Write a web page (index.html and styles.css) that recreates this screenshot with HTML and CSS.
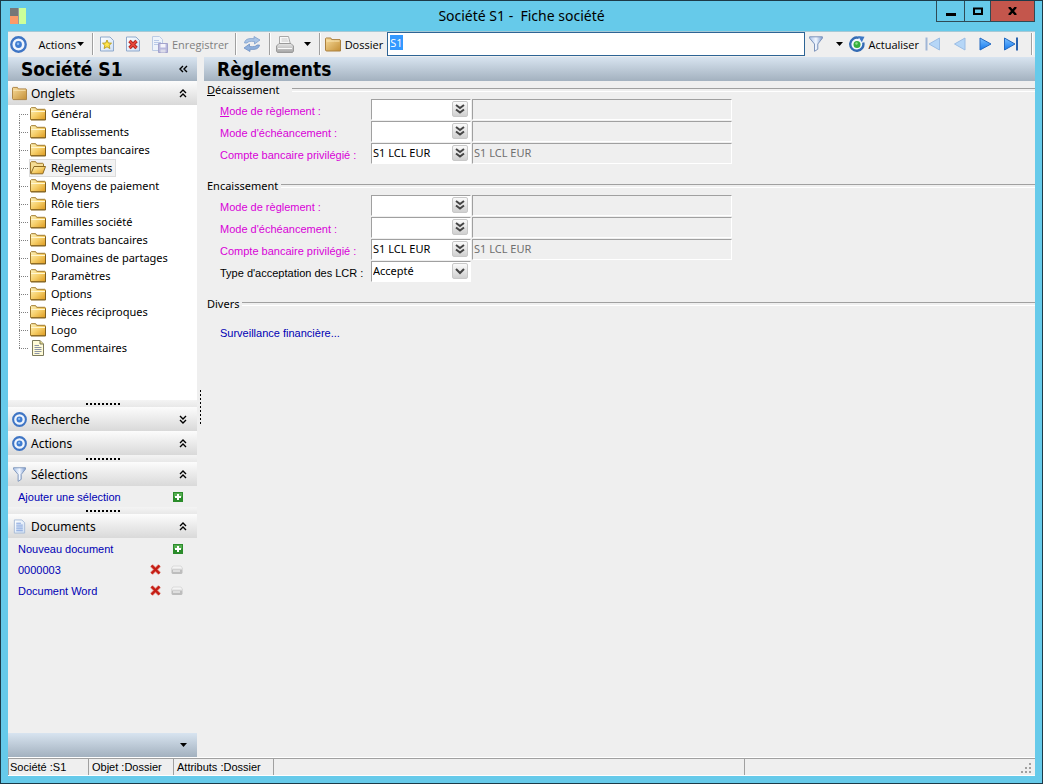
FILE: index.html
```html
<!DOCTYPE html>
<html lang="fr">
<head>
     <meta charset="UTF-8">
     <meta name="viewport" content="width=device-width, initial-scale=1.0">
     <title>Société S1 - Fiche société</title>
     <link rel="stylesheet" href="styles.css">
</head>
<body>
     <!-- shared icons -->
     <svg class="defs" aria-hidden="true">
          <defs>
               <linearGradient id="gold" x1="0" y1="0" x2="1" y2="1">
                    <stop offset="0" stop-color="#fdf3c0"/><stop offset="0.5" stop-color="#f6cf6a"/><stop offset="1" stop-color="#dd9a20"/>
               </linearGradient>
               <linearGradient id="tan" x1="0" y1="0" x2="1" y2="1">
                    <stop offset="0" stop-color="#f8dc9c"/><stop offset="1" stop-color="#c48f35"/>
               </linearGradient>
               <linearGradient id="funnel" x1="0" y1="0" x2="1" y2="0">
                    <stop offset="0" stop-color="#a9c3ea"/><stop offset="0.5" stop-color="#f2f7ff"/><stop offset="1" stop-color="#7d9cd0"/>
               </linearGradient>
               <linearGradient id="blue" x1="0" y1="0" x2="0" y2="1">
                    <stop offset="0" stop-color="#7cc0ff"/><stop offset="1" stop-color="#1479ee"/>
               </linearGradient>
               <linearGradient id="page" x1="0" y1="0" x2="1" y2="1">
                    <stop offset="0" stop-color="#ffffff"/><stop offset="1" stop-color="#cfe0f5"/>
               </linearGradient>
               <linearGradient id="silver" x1="0" y1="0" x2="0" y2="1">
                    <stop offset="0" stop-color="#e6e6e6"/><stop offset="1" stop-color="#a4a4a4"/>
               </linearGradient>
               <symbol id="i-target" viewBox="0 0 16 16">
                    <circle cx="8" cy="8" r="6.8" fill="#eef4fd" stroke="#3f75c4" stroke-width="2.2"/>
                    <circle cx="8" cy="8" r="3.2" fill="#3d7bd0"/>
                    <circle cx="7.6" cy="7.4" r="1.2" fill="#8dbcf2"/>
               </symbol>
               <symbol id="i-folder" viewBox="0 0 16 14">
                    <path d="M.5 12.5v-11l.8-.8h4.4l1 1.6h8.2l.6.6v9.6z" fill="url(#gold)" stroke="#a07a2c"/>
                    <path d="M1 4.5h14" stroke="#fff6d0"/>
                    <path d="M15.5 4v9H1" fill="none" stroke="#80601f"/>
               </symbol>
               <symbol id="i-folder-tan" viewBox="0 0 16 15">
                    <path d="M.5 13V1.5L1.2 1h4.6l.9 1.6h8.3l.5.6V14H1.2z" fill="url(#tan)" stroke="#ab8140"/>
                    <path d="M1.5 4h8l5 0" stroke="#fbe8b8"/>
               </symbol>
               <symbol id="i-folder-open" viewBox="0 0 16 14">
                    <path d="M.5 12.5v-11l.8-.8h4.4l1 1.6h6.2l.6.6v2.6" fill="#f5dd94" stroke="#a07a2c"/>
                    <path d="M.8 12.8L4 5.5h11.5l-2.7 7.3z" fill="url(#gold)" stroke="#8d6a22"/>
               </symbol>
               <symbol id="i-note" viewBox="0 0 14 16">
                    <path d="M1.5.5h7.5l3.5 3.5v11.5h-11z" fill="#fffbd8" stroke="#7c7a5c"/>
                    <path d="M9 .5V4h3.5" fill="#e9dc8a" stroke="#7c7a5c"/>
                    <path d="M3.5 5.5H8M3.5 7.5h7M3.5 9.5h7M3.5 11.5h7M3.5 13.5h5" stroke="#8c94a8"/>
               </symbol>
               <symbol id="i-doc" viewBox="0 0 14 16">
                    <path d="M1.5 1h8L12.5 4v11h-11z" fill="url(#page)" stroke="#a8bbd6"/>
                    <path d="M3.5 4.5h5M3.5 6.5h7M3.5 8.5h7M3.5 10.5h7M3.5 12.5h7" stroke="#7d9edb"/>
               </symbol>
               <symbol id="i-new" viewBox="0 0 14 16">
                    <path d="M.5 1h9.5L13.5 4.5V15H.5z" fill="url(#page)" stroke="#8fa9cc"/>
                    <path d="M7 4l1.3 3 3.2.2-2.4 2.1.8 3.2L7 10.8l-2.9 1.7.8-3.2L2.5 7.200l3.200-.2z" fill="#ffe54a" stroke="#b89a18" stroke-width=".9"/>
               </symbol>
               <symbol id="i-delete" viewBox="0 0 14 16">
                    <path d="M.5 1h9.5L13.5 4.5V15H.5z" fill="url(#page)" stroke="#8fa9cc"/>
                    <path d="M3.5 5l7 7M10.5 5l-7 7" stroke="#a01812" stroke-width="3.4"/>
                    <path d="M3.5 5l7 7M10.5 5l-7 7" stroke="#e6463c" stroke-width="1.8"/>
               </symbol>
               <symbol id="i-save" viewBox="0 0 16 17">
                    <path d="M.5.5h7l3 3v11H.5z" fill="#eef3fb" stroke="#bccbe4"/>
                    <path d="M2 4.5h5M2 6.5h7M2 8.5h5" stroke="#b9c9e8"/>
                    <path d="M6.5 7.5h9v9h-9z" fill="#b9b9de" stroke="#a3a3cc"/>
                    <path d="M8.500 8h5v3.500h-5z" fill="#f4f4fb"/>
                    <path d="M8.500 13.500h5v3h-5z" fill="#dcdcea"/>
               </symbol>
               <symbol id="i-sync" viewBox="0 0 18 16">
                    <path d="M1.5 7C2 3.500 5 2 11 2.800V.5L17 4l-5.500 4V5.500C7.500 5 5 5.500 4 7z" fill="#a9c4e6" stroke="#7f9fcb" stroke-width=".8"/>
                    <path d="M16.500 9c-.5 3.500-3.500 5-9.500 4.200v2.300L1 12l5.500-4v2.500c4 .5 6.500 0 7.500-1.500z" fill="#8fb0dd" stroke="#6e90c2" stroke-width=".8"/>
               </symbol>
               <symbol id="i-print" viewBox="0 0 18 17">
                    <path d="M3.5.5h9l2 8h-11z" fill="#f8f8f8" stroke="#a8a8a8"/>
                    <path d="M5.5 3h6M5.5 5h7" stroke="#c8c8c8"/>
                    <path d="M.5 10L3 7.500h12l2.500 2.500v5l-1 1.500h-15l-1-1.500z" fill="url(#silver)" stroke="#9a9a9a"/>
                    <path d="M2 12.500h14" stroke="#fafafa"/>
               </symbol>
               <symbol id="i-funnel" viewBox="0 0 14 16">
                    <path d="M.6.8h12.800v1.400L8.800 8v5.200L5.500 15.300V8L.6 2.200z" fill="url(#funnel)" stroke="#7e95bb"/>
               </symbol>
               <symbol id="i-reload" viewBox="0 0 16 16">
                    <path d="M14.200 6.500A6.600 6.600 0 1 1 9.800 1.900" fill="#f3f8fe" stroke="#356cb4" stroke-width="2.400"/>
                    <path d="M9 0l6.500.8-2.700 5.400z" fill="#3e78c6"/>
                    <circle cx="8" cy="8.5" r="3.5" fill="#35b03d"/>
                    <circle cx="7.5" cy="7.5" r="1.2" fill="#94e08a"/>
               </symbol>
               <symbol id="i-first" viewBox="0 0 16 16">
                    <path d="M1.5 1.5v13" stroke="#a0b6d6" stroke-width="2"/>
                    <path d="M14.5 2v12L4 8z" fill="#b5d6f7" stroke="#9bbde4"/>
               </symbol>
               <symbol id="i-prev" viewBox="0 0 16 16">
                    <path d="M14 2v12L3.5 8z" fill="#b5d6f7" stroke="#9bbde4"/>
               </symbol>
               <symbol id="i-next" viewBox="0 0 16 16">
                    <path d="M3 2v12L14 8z" fill="url(#blue)" stroke="#2268c0"/>
               </symbol>
               <symbol id="i-last" viewBox="0 0 16 16">
                    <path d="M1.5 2v12L12 8z" fill="url(#blue)" stroke="#2268c0"/>
                    <path d="M14 1.5v13" stroke="#2b62ad" stroke-width="2"/>
               </symbol>
               <symbol id="i-caret" viewBox="0 0 7 4"><path d="M0 0h7L3.5 4z"/></symbol>
               <symbol id="i-up" viewBox="0 0 8 9">
                    <path d="M1 4l3-3 3 3M1 8l3-3 3 3" fill="none" stroke="#000" stroke-width="1.4"/>
               </symbol>
               <symbol id="i-down" viewBox="0 0 8 9">
                    <path d="M1 1l3 3 3-3M1 5l3 3 3-3" fill="none" stroke="#000" stroke-width="1.4"/>
               </symbol>
               <symbol id="i-left" viewBox="0 0 9 8">
                    <path d="M4 1L1 4l3 3M8 1L5 4l3 3" fill="none" stroke="#000" stroke-width="1.4"/>
               </symbol>
               <symbol id="i-lookup" viewBox="0 0 10 10">
                    <path d="M1 1l4 3 4-3M1 5.5l4 3 4-3" fill="none" stroke="#444" stroke-width="2"/>
               </symbol>
               <symbol id="i-chevron" viewBox="0 0 10 10">
                    <path d="M1 3l4 4 4-4" fill="none" stroke="#444" stroke-width="2"/>
               </symbol>
               <symbol id="i-plus" viewBox="0 0 10 10">
                    <path d="M0 0h10v10H0z" fill="#2b8c2b"/><path d="M1 1h8v4H1z" fill="#55ad50"/>
                    <path d="M5 2v6M2 5h6" stroke="#fff" stroke-width="2"/>
               </symbol>
               <symbol id="i-cross" viewBox="0 0 11 11">
                    <path d="M1.5 1.5l8 8M9.5 1.5l-8 8" stroke="#e08a80" stroke-width="3.8"/>
                    <path d="M1.5 1.5l8 8M9.5 1.5l-8 8" stroke="#c41c14" stroke-width="2.2"/>
               </symbol>
               <symbol id="i-drive" viewBox="0 0 12 10">
                    <path d="M2 1h8l2 3H0z" fill="#f4f4f4" stroke="#cccccc" stroke-width=".6"/>
                    <path d="M.5 4.5h11v3.5l-1 1h-9l-1-1z" fill="#bdbdbd"/><path d="M2 6h7" stroke="#fff"/>
               </symbol>
          </defs>
     </svg>

     <div class="window">
          <header class="titlebar">
               <svg class="app-icon" viewBox="0 0 16 16" width="16" height="16">
                    <path d="M0 0h8v8H0z" fill="#777"/><path d="M0 8h8v8H0z" fill="#fc9a68"/>
                    <path d="M9 0h7v16H9z" fill="#ccff99"/><path d="M8 0h1v16H8z" fill="#999"/>
               </svg>
               <h1>Société S1 -&nbsp; Fiche société</h1>
               <div class="window-buttons">
                    <button class="win-min" aria-label="Réduire"><svg width="10" height="10"><path d="M0 7h10v3H0z"/></svg></button>
                    <button class="win-max" aria-label="Agrandir"><svg width="10" height="8"><path d="M1 1.5h8v5.5H1z" fill="none" stroke="#000" stroke-width="2"/></svg></button>
                    <button class="win-close" aria-label="Fermer"><svg width="9" height="8"><path d="M1 0l7 8M8 0L1 8" stroke="#000" stroke-width="2.4"/></svg></button>
               </div>
          </header>

          <div class="client">
               <div class="toolbar">
                    <button class="tool tool-actions"><svg width="17" height="17"><use href="#i-target"/></svg><span>Actions</span><svg width="7" height="4"><use href="#i-caret"/></svg></button>
                    <i class="sep"></i>
                    <button class="tool" aria-label="Nouveau"><svg width="14" height="16"><use href="#i-new"/></svg></button>
                    <button class="tool" aria-label="Supprimer"><svg width="14" height="16"><use href="#i-delete"/></svg></button>
                    <button class="tool tool-save" disabled><svg width="16" height="17"><use href="#i-save"/></svg><span>Enregistrer</span></button>
                    <i class="sep"></i>
                    <button class="tool tool-icon" aria-label="Synchroniser"><svg width="18" height="16"><use href="#i-sync"/></svg></button>
                    <i class="sep"></i>
                    <button class="tool tool-print" aria-label="Imprimer"><svg width="18" height="17"><use href="#i-print"/></svg><svg width="7" height="4"><use href="#i-caret"/></svg></button>
                    <i class="sep"></i>
                    <label class="folder-label" for="dossier"><svg width="16" height="15"><use href="#i-folder-tan"/></svg>Dossier</label>
                    <input class="folder-input" id="dossier" type="text" value="S1">
                    <button class="tool tool-filter" aria-label="Filtrer"><svg width="14" height="16"><use href="#i-funnel"/></svg><svg width="7" height="4"><use href="#i-caret"/></svg></button>
                    <button class="tool tool-reload"><svg width="16" height="16"><use href="#i-reload"/></svg><span>Actualiser</span></button>
                    <div class="nav">
                         <button class="tool" aria-label="Premier"><svg width="16" height="16"><use href="#i-first"/></svg></button>
                         <button class="tool" aria-label="Précédent"><svg width="16" height="16"><use href="#i-prev"/></svg></button>
                         <button class="tool" aria-label="Suivant"><svg width="16" height="16"><use href="#i-next"/></svg></button>
                         <button class="tool" aria-label="Dernier"><svg width="16" height="16"><use href="#i-last"/></svg></button>
                    </div>
                    <i class="sep"></i>
               </div>

               <div class="body">
                    <aside class="sidebar">
                         <div class="banner"><h2>Société S1</h2><button class="fold" aria-label="Replier"><svg width="9" height="8"><use href="#i-left"/></svg></button></div>
                         <div class="panel-head"><svg width="15" height="15"><use href="#i-folder-tan"/></svg><span>Onglets</span><button class="fold" aria-label="Replier Onglets"><svg width="8" height="9"><use href="#i-up"/></svg></button></div>
                         <ul class="tree">
                              <li><a href="#"><svg><use href="#i-folder"/></svg>Général</a></li>
                              <li><a href="#"><svg><use href="#i-folder"/></svg>Etablissements</a></li>
                              <li><a href="#"><svg><use href="#i-folder"/></svg>Comptes bancaires</a></li>
                              <li><a href="#" class="selected"><svg><use href="#i-folder-open"/></svg>Règlements</a></li>
                              <li><a href="#"><svg><use href="#i-folder"/></svg>Moyens de paiement</a></li>
                              <li><a href="#"><svg><use href="#i-folder"/></svg>Rôle tiers</a></li>
                              <li><a href="#"><svg><use href="#i-folder"/></svg>Familles société</a></li>
                              <li><a href="#"><svg><use href="#i-folder"/></svg>Contrats bancaires</a></li>
                              <li><a href="#"><svg><use href="#i-folder"/></svg>Domaines de partages</a></li>
                              <li><a href="#"><svg><use href="#i-folder"/></svg>Paramètres</a></li>
                              <li><a href="#"><svg><use href="#i-folder"/></svg>Options</a></li>
                              <li><a href="#"><svg><use href="#i-folder"/></svg>Pièces réciproques</a></li>
                              <li><a href="#"><svg><use href="#i-folder"/></svg>Logo</a></li>
                              <li><a href="#"><svg class="note"><use href="#i-note"/></svg>Commentaires</a></li>
                         </ul>
                         <div class="splitter"></div>
                         <div class="panel-head"><svg width="15" height="15"><use href="#i-target"/></svg><span>Recherche</span><button class="fold" aria-label="Déplier Recherche"><svg width="8" height="9"><use href="#i-down"/></svg></button></div>
                         <div class="panel-head"><svg width="15" height="15"><use href="#i-target"/></svg><span>Actions</span><button class="fold" aria-label="Replier Actions"><svg width="8" height="9"><use href="#i-up"/></svg></button></div>
                         <div class="splitter"></div>
                         <div class="panel-head"><svg width="15" height="15"><use href="#i-funnel"/></svg><span>Sélections</span><button class="fold" aria-label="Replier Sélections"><svg width="8" height="9"><use href="#i-up"/></svg></button></div>
                         <div class="link-row"><a href="#">Ajouter une sélection</a><button aria-label="Ajouter"><svg width="10" height="10"><use href="#i-plus"/></svg></button></div>
                         <div class="splitter"></div>
                         <div class="panel-head"><svg width="15" height="15"><use href="#i-doc"/></svg><span>Documents</span><button class="fold" aria-label="Replier Documents"><svg width="8" height="9"><use href="#i-up"/></svg></button></div>
                         <div class="link-row"><a href="#">Nouveau document</a><button aria-label="Ajouter"><svg width="10" height="10"><use href="#i-plus"/></svg></button></div>
                         <div class="link-row"><a href="#">0000003</a><button aria-label="Supprimer"><svg width="11" height="11"><use href="#i-cross"/></svg></button><button aria-label="Ouvrir"><svg width="12" height="10"><use href="#i-drive"/></svg></button></div>
                         <div class="link-row"><a href="#">Document Word</a><button aria-label="Supprimer"><svg width="11" height="11"><use href="#i-cross"/></svg></button><button aria-label="Ouvrir"><svg width="12" height="10"><use href="#i-drive"/></svg></button></div>
                         <div class="banner sidebar-foot"><button class="fold" aria-label="Options du volet"><svg width="7" height="4"><use href="#i-caret"/></svg></button></div>
                    </aside>
                    <div class="v-splitter"></div>

                    <main class="content">
                         <div class="banner"><h2>Règlements</h2></div>

                         <section class="group">
                              <h3 class="wide-gap"><span><u>D</u>écaissement</span></h3>
                              <div class="rows">
                                   <label for="dec-mode"><u>M</u>ode de règlement :</label>
                                   <div class="combo"><input id="dec-mode" type="text"><button aria-label="Choisir"><svg><use href="#i-lookup"/></svg></button></div>
                                   <input class="readout" type="text" aria-label="Libellé" readonly>
                                   <label for="dec-ech">Mode d'échéancement :</label>
                                   <div class="combo"><input id="dec-ech" type="text"><button aria-label="Choisir"><svg><use href="#i-lookup"/></svg></button></div>
                                   <input class="readout" type="text" aria-label="Libellé" readonly>
                                   <label for="dec-compte">Compte bancaire privilégié :</label>
                                   <div class="combo"><input id="dec-compte" type="text" value="S1 LCL EUR"><button aria-label="Choisir"><svg><use href="#i-lookup"/></svg></button></div>
                                   <input class="readout" type="text" aria-label="Libellé" value="S1 LCL EUR" readonly>
                              </div>
                         </section>

                         <section class="group">
                              <h3><span>Encaissement</span></h3>
                              <div class="rows">
                                   <label for="enc-mode">Mode de règlement :</label>
                                   <div class="combo"><input id="enc-mode" type="text"><button aria-label="Choisir"><svg><use href="#i-lookup"/></svg></button></div>
                                   <input class="readout" type="text" aria-label="Libellé" readonly>
                                   <label for="enc-ech">Mode d'échéancement :</label>
                                   <div class="combo"><input id="enc-ech" type="text"><button aria-label="Choisir"><svg><use href="#i-lookup"/></svg></button></div>
                                   <input class="readout" type="text" aria-label="Libellé" readonly>
                                   <label for="enc-compte">Compte bancaire privilégié :</label>
                                   <div class="combo"><input id="enc-compte" type="text" value="S1 LCL EUR"><button aria-label="Choisir"><svg><use href="#i-lookup"/></svg></button></div>
                                   <input class="readout" type="text" aria-label="Libellé" value="S1 LCL EUR" readonly>
                                   <label class="plain" for="enc-lcr">Type d'acceptation des LCR :</label>
                                   <div class="combo">
                                        <select id="enc-lcr"><option>Accepté</option></select>
                                        <span class="drop"><svg><use href="#i-chevron"/></svg></span>
                                   </div>
                              </div>
                         </section>

                         <section class="group">
                              <h3><span>Divers</span></h3>
                              <a class="more" href="#">Surveillance financière...</a>
                         </section>
                    </main>
               </div>

               <footer class="statusbar">
                    <span class="cell cell-company">Société :S1</span>
                    <span class="cell cell-object">Objet :Dossier</span>
                    <span class="cell cell-attr">Attributs :Dossier</span>
                    <span class="cell cell-wide"></span>
                    <span class="cell cell-end"><svg width="11" height="11" fill="#a0a0a0"><path d="M8 0h2v2H8zM4 4h2v2H4zM8 4h2v2H8zM0 8h2v2H0zM4 8h2v2H4zM8 8h2v2H8z"/></svg></span>
               </footer>
          </div>
     </div>
     <script>
          // the folder code is selected when the form opens
          const dossier = document.getElementById('dossier');
          dossier.focus();
          dossier.select();
     </script>
</body>
</html>
```
FILE: styles.css
```css
* {
     box-sizing: border-box;
}
body {
     margin: 0;
     font-family: "Noto Sans", "Open Sans", sans-serif;
     font-size: 12px;
     color: #000;
}
h1, h2, h3, ul {
     margin: 0;
     padding: 0;
}
button, input, select {
     font: inherit;
     color: inherit;
     border-radius: 0;
}
button {
     display: flex;
     align-items: center;
     padding: 0;
     border: none;
     background: none;
}
a {
     color: #0000b4;
     text-decoration: none;
}
svg {
     flex: none;
     display: block;
}
.defs {
     position: absolute;
     width: 0;
     height: 0;
}

/* window frame */
.window {
     display: flex;
     flex-direction: column;
     min-height: 100vh;
     padding: 0 7px 7px;
     border: 1px solid #1c3a48;
     background: #66caea;
}
.titlebar {
     display: grid;
     grid-template-columns: 1fr auto 1fr;
     align-items: center;
     height: 30px;
}
.app-icon {
     margin-left: 2px;
}
.titlebar h1 {
     font-size: 14px;
     font-weight: normal;
     line-height: 30px;
}
.window-buttons {
     display: flex;
     justify-self: end;
     align-self: start;
     border: 1px solid #2f4a55;
     border-top: none;
}
.window-buttons button {
     justify-content: center;
     height: 20px;
}
.win-min {
     width: 27px;
}
.window-buttons .win-max {
     width: 26px;
     border-left: 1px solid #2f4a55;
}
.window-buttons .win-close {
     width: 44px;
     border-left: 1px solid #2f4a55;
     background: #c4564c;
}
.client {
     flex: 1;
     display: flex;
     flex-direction: column;
     background: #efefef;
}

/* toolbar */
.toolbar {
     display: flex;
     align-items: center;
     height: 26px;
     padding: 0 2px 1px;
     font-family: "Open Sans", "Noto Sans", sans-serif;
     font-size: 11px;
     border-top: 1px solid #a5c9d6;
}
.tool {
     flex: none;
     justify-content: space-between;
     margin-right: 6px;
     margin-left: 6px;
}
.tool-actions {
     width: 74px;
     margin-left: 0;
     margin-right: 8px;
}
.tool-actions span {
     margin-left: auto;
     margin-right: 1px;
}
.tool-save {
     gap: 4px;
     color: #808080;
}
.tool-print {
     width: 35px;
     margin-left: 5px;
     margin-right: 8px;
}
.tool-icon {
     margin-right: 8px;
}
.sep {
     flex: none;
     width: 2px;
     height: 22px;
     border-left: 1px solid #a0a0a0;
     border-right: 1px solid #fff;
}
.folder-label {
     display: flex;
     align-items: center;
     gap: 4px;
     margin: 0 4px;
}
.folder-input {
     flex: 1;
     min-width: 80px;
     height: 24px;
     padding: 0 2px 4px;
     border: 1px solid #2d6495;
     outline: none;
     background: #fff;
}
.folder-input::selection {
     background: #3399ff;
     color: #fff;
}
.tool-filter {
     width: 34px;
     margin-left: 4px;
}
.tool-reload {
     gap: 4px;
     margin-left: 0;
}
.nav {
     display: flex;
     gap: 10px;
     margin-right: 12px;
}
.nav .tool {
     margin: 0;
}

/* page body */
.body {
     flex: 1;
     display: flex;
}
.banner {
     display: flex;
     align-items: center;
     justify-content: space-between;
     height: 24px;
     padding: 0 9px 0 13px;
     background: linear-gradient(#d8e4f0, #a3b1bf);
}
.banner h2 {
     font-family: "DejaVu Sans Condensed", "Noto Sans", sans-serif;
     font-size: 19px;
     line-height: 24px;
}
.sidebar {
     flex: none;
     display: flex;
     flex-direction: column;
     width: 189px;
}
.panel-head {
     display: flex;
     align-items: center;
     gap: 4px;
     height: 24px;
     padding: 0 10px 0 4px;
     background: linear-gradient(#fcfcfc, #d9d9d9);
}
.fold {
     margin-left: auto;
}
.tree {
     padding-left: 11px;
     padding-bottom: 43px;
     list-style: none;
     background: #fff;
     font-size: 11px;
}
.tree li {
     display: flex;
     height: 18px;
}
/* dotted branch lines */
.tree li::before {
     content: "";
     width: 10px;
     background:
          repeating-linear-gradient(to bottom, #808080 0 1px, transparent 1px 2px) 0 0 / 1px 18px no-repeat,
          repeating-linear-gradient(to right, #808080 0 1px, transparent 1px 2px) 0 9px / 10px 1px no-repeat;
}
.tree li:first-child::before {
     background-position: 0 9px, 0 9px;
}
.tree li:last-child::before {
     background-size: 1px 9px, 10px 1px;
}
.tree a {
     display: flex;
     align-items: center;
     gap: 5px;
     padding: 0 3px 0 0;
     border: 1px solid transparent;
     line-height: 16px;
     color: #000;
}
.tree svg {
     width: 16px;
     height: 14px;
}
.tree svg.note {
     height: 16px;
}
.tree .selected {
     border-color: #dcdcdc;
     background: #f2f2f2;
}
.splitter {
     display: flex;
     justify-content: center;
     align-items: center;
     height: 7px;
     background: linear-gradient(#f4f4f4, #e8e8e8);
}
.splitter::before {
     content: "";
     width: 34px;
     height: 2px;
     background: repeating-linear-gradient(to right, #000 0 2px, transparent 2px 4px);
}
.v-splitter {
     flex: none;
     display: flex;
     justify-content: center;
     align-items: center;
     width: 7px;
}
.v-splitter::before {
     content: "";
     width: 1px;
     height: 34px;
     background: repeating-linear-gradient(to bottom, #000 0 2px, transparent 2px 4px);
}
.link-row {
     display: flex;
     align-items: center;
     gap: 10px;
     height: 21px;
     padding: 0 14px 0 10px;
     font-family: "Liberation Sans", Arial, sans-serif;
     font-size: 11px;
}
.link-row a {
     margin-right: auto;
}
.sidebar-foot {
     margin-top: auto;
     padding-right: 10px;
}

/* form */
.content {
     flex: 1;
     min-width: 0;
}
.group {
     margin-bottom: 12px;
}
.group h3 {
     display: flex;
     align-items: center;
     gap: 3px;
     height: 17px;
     padding-left: 3px;
     font-size: 11px;
     font-weight: normal;
     line-height: 16px;
}
.group h3.wide-gap {
     gap: 12px;
}
.group h3::after {
     content: "";
     flex: 1;
     height: 2px;
     border-top: 1px solid #a0a0a0;
     border-bottom: 1px solid #fff;
}
.rows {
     display: grid;
     grid-template-columns: 150px 100px minmax(0, 260px);
     grid-auto-rows: 22px;
     column-gap: 1px;
     padding: 1px 0 0 16px;
}
.rows label {
     padding-top: 2px;
     font-family: "Liberation Sans", Arial, sans-serif;
     font-size: 11px;
     line-height: 20px;
     white-space: nowrap;
     color: #d800d8;
}
.rows .plain {
     color: #000;
}
.combo {
     display: flex;
     height: 21px;
     padding-right: 1px;
     border: 1px solid #fff;
     border-top-color: #a0a0a0;
     border-left-color: #a0a0a0;
     background: #fff;
}
.combo input,
.combo select {
     flex: 1;
     min-width: 0;
     height: 19px;
     padding: 0 0 2px 1px;
     border: none;
     outline: none;
     appearance: none;
     background: none;
     font-size: 11px;
}
.combo button,
.combo .drop {
     flex: none;
     display: flex;
     justify-content: center;
     align-items: center;
     width: 16px;
     height: 16px;
     margin: 1px;
     border: 1px solid #c8c8c8;
     border-radius: 2px;
     background: linear-gradient(#fafafa, #d0d0d0);
}
.combo .drop {
     pointer-events: none;
}
.combo button svg,
.combo .drop svg {
     width: 10px;
     height: 10px;
}
.readout {
     width: 100%;
     height: 21px;
     padding: 0 1px 2px;
     border: 1px solid #fff;
     border-top-color: #a0a0a0;
     border-left-color: #a0a0a0;
     outline: none;
     background: #efefef;
     font-size: 11px;
     color: #707070;
}
.more {
     display: inline-block;
     padding: 13px 0 0 16px;
     font-family: "Liberation Sans", Arial, sans-serif;
     font-size: 11px;
     line-height: 17px;
}

/* status bar */
.statusbar {
     display: flex;
     height: 19px;
     border-top: 1px solid #fff;
     border-bottom: 1px solid #fff;
     font-family: "Liberation Sans", Arial, sans-serif;
     font-size: 11px;
     line-height: 17px;
}
.cell {
     padding-left: 2px;
     border-top: 1px solid #a0a0a0;
     border-right: 1px solid #a0a0a0;
     white-space: nowrap;
}
.cell-company {
     width: 81px;
     border-left: 1px solid #a0a0a0;
     padding-left: 1px;
}
.cell-object {
     width: 85px;
     padding-left: 3px;
}
.cell-attr {
     width: 100px;
     padding-left: 3px;
}
.cell-wide {
     flex: 472;
}
.cell-end {
     flex: 289;
     display: flex;
     justify-content: flex-end;
     align-items: flex-end;
     padding: 0 3px 1px 0;
     border-right: none;
}
```
